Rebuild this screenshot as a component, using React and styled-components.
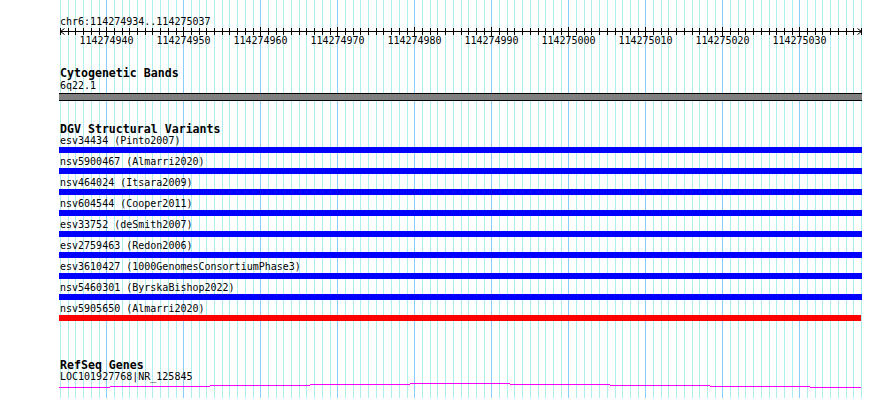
import React from 'react';
import styled, { createGlobalStyle } from 'styled-components';

const GlobalStyle = createGlobalStyle`
  html, body {
    margin: 0;
    padding: 0;
    background: #ffffff;
    overflow: hidden;
  }
  body {
    font-family: "DejaVu Sans Mono", "Liberation Mono", monospace;
    color: #000000;
  }
`;

const START = 114274934;
const END = 114275037;
const SCALE = 801 / (END - START + 1);
const xOf = pos => Math.round(1 + (pos - START) * SCALE);

const positions = [];
for (let p = START; p <= END + 1; p++) positions.push(p);

const variants = [
  { id: 'esv34434', study: 'Pinto2007' },
  { id: 'nsv5900467', study: 'Almarri2020' },
  { id: 'nsv464024', study: 'Itsara2009' },
  { id: 'nsv604544', study: 'Cooper2011' },
  { id: 'esv33752', study: 'deSmith2007' },
  { id: 'esv2759463', study: 'Redon2006' },
  { id: 'esv3610427', study: '1000GenomesConsortiumPhase3' },
  { id: 'nsv5460301', study: 'ByrskaBishop2022' },
  { id: 'nsv5905650', study: 'Almarri2020', loss: true },
];

const Page = styled.div`
  padding-left: 59px;
  height: 398px;
`;

const Panel = styled.div`
  position: relative;
  width: 803px;
  height: 398px;
`;

const GridLayer = styled.svg`
  position: absolute;
  top: 0;
  left: 0;
  z-index: 0;
`;

const Tracks = styled.div`
  position: relative;
  z-index: 1;
`;

const RulerSvg = styled.svg`
  display: block;
  font-family: "DejaVu Sans Mono", "Liberation Mono", monospace;
  font-size: 10px;
`;

const Track = styled.section`
  margin-top: ${p => p.$gap}px;
`;

const TrackTitle = styled.div`
  font-weight: bold;
  font-size: 11.6px;
  line-height: 12px;
  height: 12px;
  padding-left: 1px;
  white-space: nowrap;
`;

const FeatureLabel = styled.div`
  font-size: 10px;
  line-height: ${p => p.$lh || 12}px;
  height: ${p => p.$lh || 12}px;
  padding-left: 1px;
  white-space: nowrap;
`;

const Row = styled.div`
  height: 21px;
`;

const Bar = styled.div`
  height: ${p => p.$h}px;
  background: ${p => p.$color};
  width: ${p => p.$w || 803}px;
  margin-top: ${p => p.$mt || 0}px;
  box-sizing: border-box;
  border-top: ${p => (p.$outlined ? '1px solid #000' : 'none')};
  border-bottom: ${p => (p.$outlined ? '1px solid #000' : 'none')};
`;

const GeneSvg = styled.svg`
  display: block;
`;

function Grid() {
  return (
    <GridLayer width={803} height={398} shapeRendering="crispEdges">
      {positions.map(p => (
        <line
          key={p}
          x1={xOf(p) + 0.5}
          x2={xOf(p) + 0.5}
          y1={0}
          y2={398}
          stroke={p % 10 === 0 ? '#87cefa' : '#afeeee'}
          strokeWidth={1}
        />
      ))}
    </GridLayer>
  );
}

function Ruler() {
  const y = 31.5;
  const left = xOf(START) + 0.5;
  const right = xOf(END + 1) + 0.5;
  return (
    <RulerSvg width={803} height={56}>
      <text x={1} y={25} fill="#000">chr6:{START}..{END}</text>
      <g stroke="#000" strokeWidth={1} shapeRendering="crispEdges" fill="none">
        <line x1={left} x2={right} y1={y} y2={y} />
        {positions.map(p => {
          const x = xOf(p) + 0.5;
          const major = p % 10 === 0;
          return <line key={p} x1={x} x2={x} y1={major ? 27 : 28} y2={major ? 36 : 35} />;
        })}
      </g>
      <polyline points={`${left + 4},28.5 ${left},${y} ${left + 4},34.5`} stroke="#000" fill="none" />
      <polyline points={`${right - 4},28.5 ${right},${y} ${right - 4},34.5`} stroke="#000" fill="none" />
      {positions
        .filter(p => p % 10 === 0)
        .map(p => (
          <text key={p} x={xOf(p) + 0.5} y={44} textAnchor="middle" fill="#000">
            {p}
          </text>
        ))}
    </RulerSvg>
  );
}

function GeneModel() {
  // shallow hat-shaped intron line, stepping 1px every 100px
  const steps = [
    [0, 51, 4], [51, 151, 3], [151, 251, 2], [251, 351, 1], [351, 451, 0],
    [451, 551, 1], [551, 651, 2], [651, 751, 3], [751, 802, 4],
  ];
  return (
    <GeneSvg width={803} height={5} shapeRendering="crispEdges">
      {steps.map(([a, b, r]) => (
        <line key={a} x1={a} x2={b} y1={r + 0.5} y2={r + 0.5} stroke="#ff00ff" strokeWidth={1} />
      ))}
    </GeneSvg>
  );
}

export default function App() {
  return (
    <Page>
      <GlobalStyle />
      <Panel>
        <Grid />
        <Tracks>
          <Ruler />

          <Track $gap={11}>
            <TrackTitle>Cytogenetic Bands</TrackTitle>
            <FeatureLabel $lh={13}>6q22.1</FeatureLabel>
            <Bar $h={8} $mt={1} $color="#808080" $outlined />
          </Track>

          <Track $gap={22}>
            <TrackTitle>DGV Structural Variants</TrackTitle>
            {variants.map(v => (
              <Row key={v.id}>
                <FeatureLabel>{v.id} ({v.study})</FeatureLabel>
                <Bar $h={6} $color={v.loss ? '#ff0000' : '#0000ff'} $w={v.loss ? 802 : 803} />
              </Row>
            ))}
          </Track>

          <Track $gap={35}>
            <TrackTitle>RefSeq Genes</TrackTitle>
            <FeatureLabel>LOC101927768|NR_125845</FeatureLabel>
            <GeneModel />
          </Track>
        </Tracks>
      </Panel>
    </Page>
  );
}
